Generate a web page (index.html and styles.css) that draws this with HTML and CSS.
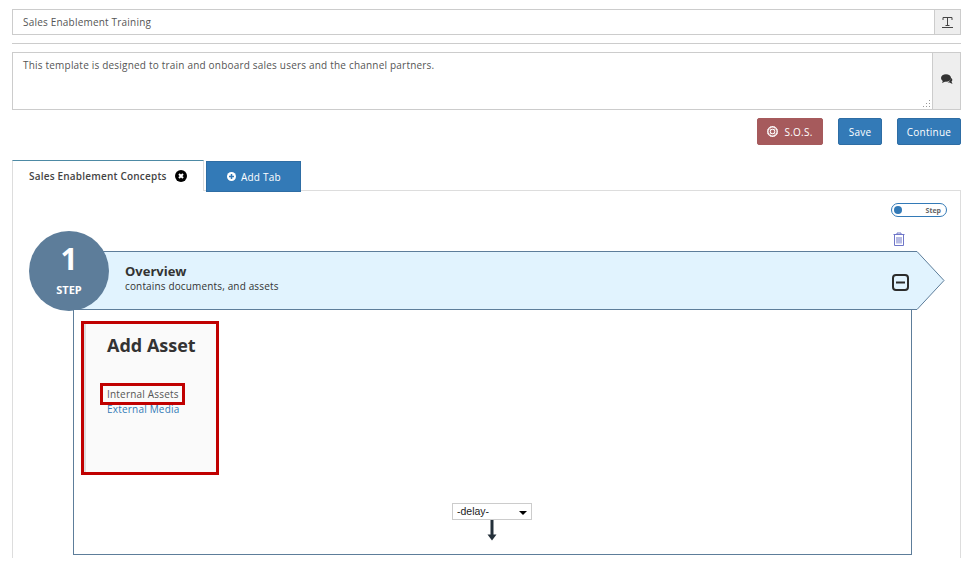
FILE: index.html
```html
<!DOCTYPE html>
<html lang="en">
<head>
<meta charset="utf-8">
<title>Sales Enablement Training</title>
<link rel="stylesheet" href="styles.css">
</head>
<body>
<div class="field field-title">
  <div class="field-text">Sales Enablement Training</div>
  <div class="addon addon-title">
    <svg width="11" height="13" viewBox="0 0 11 13"><path d="M1 4V1.500H10V4M5.500 1.500V9.500M3.500 9.500H7.500" fill="none" stroke="#444" stroke-width="1"/><path d="M0 11.500H11" stroke="#444" stroke-width="1"/></svg>
  </div>
</div>
<hr class="rule">
<div class="field field-desc">
  <div class="field-text">This template is designed to train and onboard sales users and the channel partners.
    <svg class="grip" width="9" height="9" viewBox="0 0 9 9"><path d="M7 1h1v1H7zM7 4h1v1H7zM4 4h1v1H4zM7 7h1v1H7zM4 7h1v1H4zM1 7h1v1H1z" fill="#999"/></svg>
  </div>
  <div class="addon addon-desc">
    <svg width="12" height="11" viewBox="0 0 12 11"><ellipse cx="5" cy="4" rx="5" ry="3.800" fill="#333"/><path d="M2 6.500L1 9L4.500 7.500Z" fill="#333"/><path d="M9.500 3.500C11.500 4.500 12 6.500 10.500 7.500L11.500 10L8.500 8.500H6.500C8.500 7.500 10 6 9.500 3.500Z" fill="#333"/></svg>
  </div>
</div>
<div class="actions">
  <button class="btn btn-sos" type="button">
    <svg width="11" height="11" viewBox="0 0 11 11"><circle cx="5.500" cy="5.500" r="4.700" fill="none" stroke="#fff" stroke-width="1.400"/><circle cx="5.500" cy="5.500" r="2.300" fill="none" stroke="#fff" stroke-width="1"/><path d="M3.700 0V11M7.300 0V11M0 3.700H11M0 7.300H11" stroke="#fff" stroke-width=".6" opacity=".7"/></svg>
    S.O.S.
  </button>
  <button class="btn btn-blue btn-save" type="button">Save</button>
  <button class="btn btn-blue btn-continue" type="button">Continue</button>
</div>
<div class="tabs">
  <div class="tab tab-active">Sales Enablement Concepts
    <svg width="12" height="12" viewBox="0 0 12 12"><circle cx="6" cy="6" r="6" fill="#000"/><path d="M4 4L8 8M8 4L4 8" stroke="#fff" stroke-width="2"/></svg>
  </div>
  <div class="tab tab-add">
    <svg width="9" height="9" viewBox="0 0 9 9"><circle cx="4.500" cy="4.500" r="4.500" fill="#fff"/><path d="M2 4.500H7M4.500 2V7" stroke="#337ab7" stroke-width="1.500"/></svg>
    Add Tab
  </div>
</div>
<div class="pane">
  <div class="pane-tools">
    <div class="toggle"><span class="toggle-dot"></span><span class="toggle-label">Step</span></div>
    <svg class="trash" width="12" height="14" viewBox="0 0 12 14"><path d="M.5 2.500H11.500M4 2.500V1H8V2.500M1.500 2.500V13.500H10.500V2.500M4 5V11.500M6 5V11.500M8 5V11.500" fill="none" stroke="#6f76c8" stroke-width="1"/></svg>
  </div>
  <div class="step-head">
    <svg class="chevron" width="876" height="59" viewBox="0 0 876 59"><path d="M0 .5H848L875 29.500L848 58.500H0Z" fill="#e1f3fe" stroke="#5d7d9a" stroke-width="1"/></svg>
    <div class="badge"><span class="badge-num">1</span><span class="badge-label">STEP</span></div>
    <div class="step-copy">
      <div class="step-title">Overview</div>
      <div class="step-sub">contains documents, and assets</div>
    </div>
    <svg class="collapse" width="17" height="17" viewBox="0 0 17 17"><rect x="1" y="1" width="15" height="15" rx="3" fill="none" stroke="#2b2b2b" stroke-width="2"/><path d="M4 8.500H13" stroke="#2b2b2b" stroke-width="2"/></svg>
  </div>
  <div class="step-body">
    <div class="asset-box">
      <h2 class="asset-title">Add Asset</h2>
      <div class="asset-links">
        <a class="asset-link asset-link-on">Internal Assets</a>
        <a class="asset-link">External Media</a>
      </div>
    </div>
    <div class="delay">
      <div class="delay-select">-delay-<span class="caret"></span></div>
      <svg width="10" height="21" viewBox="0 0 10 21"><path d="M5 0V16" stroke="#24303a" stroke-width="3"/><path d="M.5 14.500H9.500L5 20.500Z" fill="#24303a"/></svg>
    </div>
  </div>
</div>
</body>
</html>
```
FILE: styles.css
```css
* { box-sizing: border-box; }
html, body { height: 562px; overflow: hidden; }
body {
  margin: 0;
  padding: 9px 5px 0 12px;
  background: #fff;
  font-family: "Open Sans", sans-serif;
  font-size: 10px;
  color: #555;
}
.field {
  display: flex;
  border: 1px solid #ccc;
  background: #fff;
}
.field-title { height: 26px; }
.field-desc { height: 58px; }
.field-text {
  position: relative;
  flex: 1;
  padding: 0 10px;
  letter-spacing: .2px;
}
.field-title .field-text { line-height: 24px; }
.field-desc .field-text { padding-top: 4px; line-height: 16px; }
.grip { position: absolute; right: 1px; bottom: 1px; }
.addon {
  display: flex;
  align-items: center;
  justify-content: center;
  background: #eee;
  border-left: 1px solid #ccc;
}
.addon-title { width: 26px; }
.addon-desc { width: 28px; padding-bottom: 3px; }
.rule {
  height: 1px;
  margin: 8px 0;
  border: 0;
  background: #ccc;
}
.actions {
  display: flex;
  justify-content: flex-end;
  gap: 15px;
  margin-top: 8px;
}
.btn {
  display: flex;
  align-items: center;
  justify-content: center;
  height: 27px;
  padding: 0;
  border: 1px solid;
  border-radius: 2px;
  color: #fff;
  font: 10px "Open Sans", sans-serif;
  letter-spacing: .25px;
}
.btn-sos { width: 66px; gap: 6px; background: #a65a5c; border-color: #a65a5c; }
.btn-blue { background: #337ab7; border-color: #2e6da4; }
.btn-save { width: 44px; }
.btn-continue { width: 64px; }
.tabs {
  display: flex;
  align-items: flex-start;
  gap: 2px;
  height: 31px;
  margin-top: 15px;
  position: relative;
  z-index: 1;
}
.tab {
  display: flex;
  align-items: center;
  height: 31px;
}
.tab-active {
  width: 192px;
  gap: 8px;
  padding-left: 16px;
  background: #fff;
  border: 1px solid #ddd;
  border-top-color: #4d8aa5;
  border-bottom: 0;
  color: #444;
  font-weight: 600;
  letter-spacing: .2px;
}
.tab-add {
  width: 95px;
  gap: 5px;
  margin-top: 1px;
  padding-left: 20px;
  background: #337ab7;
  border: 1px solid #2e6da4;
  color: #fff;
  letter-spacing: .2px;
}
.pane {
  height: 368px;
  margin-top: -1px;
  padding: 12px 13px 0 15px;
  border: 1px solid #ddd;
  border-bottom: 0;
}
.pane-tools {
  display: flex;
  flex-direction: column;
  align-items: flex-end;
  height: 48px;
}
.toggle {
  display: flex;
  align-items: center;
  justify-content: space-between;
  width: 56px;
  height: 14px;
  padding: 0 5px 0 2px;
  border: 1px solid #337ab7;
  border-radius: 7px;
}
.toggle-dot {
  width: 8px;
  height: 8px;
  border-radius: 50%;
  background: #337ab7;
}
.toggle-label { font-size: 7px; font-weight: 700; color: #666; }
.trash { margin: 15px 42px 0 0; }
.step-head {
  position: relative;
  height: 59px;
  margin-left: 41px;
}
.chevron { position: absolute; left: 0; top: 0; }
.badge {
  position: absolute;
  left: -40px;
  top: -20px;
  display: flex;
  flex-direction: column;
  align-items: center;
  width: 80px;
  height: 80px;
  border-radius: 50%;
  background: #5d7d9a;
  color: #fff;
}
.badge-num { margin-top: 7px; font-size: 30px; font-weight: 700; line-height: 42px; }
.badge-label { margin-top: 3px; font-size: 11px; font-weight: 700; line-height: 14px; }
.step-copy { position: absolute; left: 56px; top: 12px; color: #333; }
.step-title { font-size: 13px; font-weight: 700; line-height: 16px; }
.step-sub { font-size: 10px; line-height: 14px; letter-spacing: .15px; }
.collapse { position: absolute; left: 823px; top: 23px; }
.step-body {
  position: relative;
  height: 246px;
  width: 839px;
  margin-left: 45px;
  margin-top: -1px;
  padding: 11px 7px 0;
  background: #fff;
  border: 1px solid #5d7d9a;
}
.asset-box {
  width: 138px;
  height: 154px;
  padding: 9px 22px 0 17px;
  background: #fafafa;
  border: 3px solid #c00000;
  box-shadow: inset 2px 0 0 #ddd;
}
.asset-title {
  margin: 0;
  font-size: 18px;
  font-weight: 700;
  line-height: 24px;
  color: #333;
  white-space: nowrap;
  padding-left: 6px;
}
.asset-links { display: flex; flex-direction: column; margin-top: 26px; }
.asset-link {
  align-self: flex-start;
  margin: -3px 0 0 -1px;
  padding: 0 3px 0 4px;
  line-height: 15px;
  color: #337ab7;
  letter-spacing: .2px;
  white-space: nowrap;
  border: 3px solid transparent;
}
.asset-link-on { color: #555; border-color: #c00000; margin: 0 0 -3px -1px; line-height: 16px; }
.delay {
  position: absolute;
  left: 378px;
  top: 193px;
  display: flex;
  flex-direction: column;
  align-items: center;
}
.delay-select {
  position: relative;
  width: 80px;
  height: 17px;
  padding-left: 4px;
  border: 1px solid #ccc;
  line-height: 15px;
  color: #222;
  font-family: "Liberation Sans", sans-serif;
  font-size: 10.500px;
}
.caret {
  position: absolute;
  right: 4px;
  top: 7px;
  border: 4px solid transparent;
  border-top-color: #000;
  border-bottom: 0;
}
```
